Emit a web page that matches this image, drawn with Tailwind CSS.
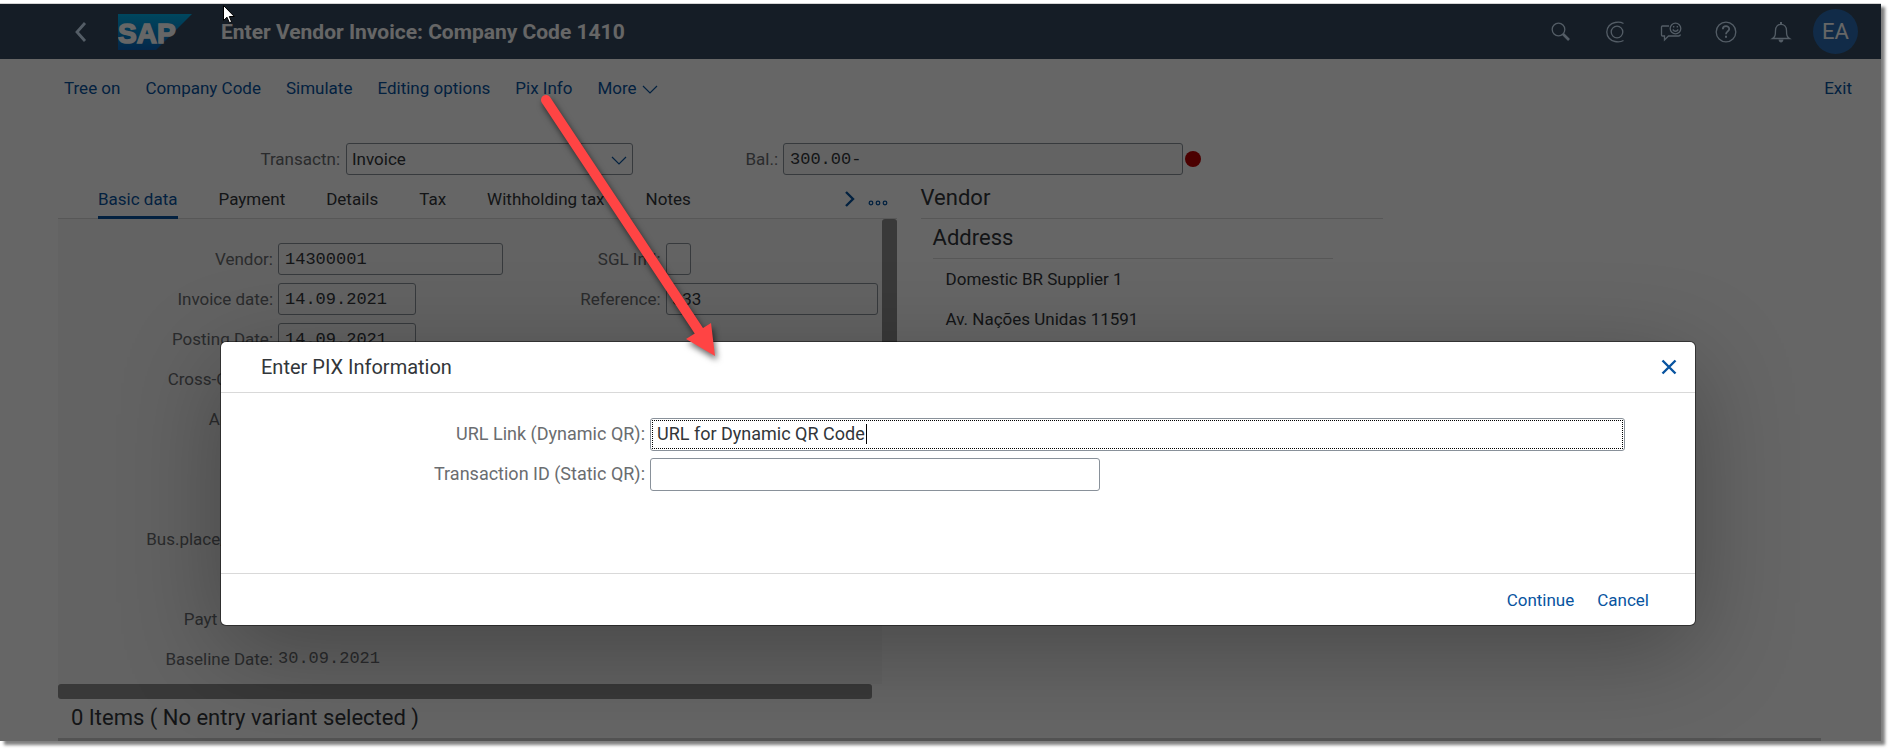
<!DOCTYPE html>
<html lang="en">
<head>
  <meta charset="UTF-8" />
  <meta name="viewport" content="width=device-width, initial-scale=1" />
  <title>Enter Vendor Invoice: Company Code 1410</title>
  <script src="https://cdn.jsdelivr.net/npm/@tailwindcss/browser@4"></script>
</head>
<body class="bg-white min-h-screen flex flex-col pt-[3px] pr-[9px] pb-[9px] text-[17px] leading-6 text-[#32363a] font-['Roboto','Liberation_Sans',sans-serif]">

  <div class="relative flex-1 flex flex-col bg-white border-t border-[#d4d4d4] shadow-[4px_4px_3px_rgba(0,0,0,0.5)]">

    <!-- Shell bar -->
    <header class="h-[55px] bg-[#354a5f] flex items-center pl-[73px] pr-[23px] text-white">
      <button aria-label="Back" class="w-4 mr-[29px]">
        <svg class="w-4 h-5" viewBox="0 0 16 20" fill="none" stroke="#d1e8ff" stroke-width="2.8"><path d="M12 1 4 10l8 9" /></svg>
      </button>
      <svg class="w-[74px] h-9 mr-[29px]" viewBox="0 0 74 36" role="img" aria-label="SAP">
        <defs>
          <linearGradient id="sap" x1="0" y1="0" x2="0" y2="1">
            <stop offset="0" stop-color="#00b1eb" />
            <stop offset="1" stop-color="#0a62b9" />
          </linearGradient>
        </defs>
        <path d="M0 0h74L38 36H0z" fill="url(#sap)" />
        <text x="0" y="29" font-family="Liberation Sans, sans-serif" font-weight="700" font-size="28" stroke="#fff" stroke-width="1.5" fill="#fff">SAP</text>
      </svg>
      <h1 class="flex-1 text-[21px] font-bold">Enter Vendor Invoice: Company Code 1410</h1>
      <div class="flex items-center gap-[33px] mr-[21px]">
        <button aria-label="Search">
          <svg class="w-[22px] h-[22px]" viewBox="0 0 22 22" fill="none" stroke="#d1e8ff" stroke-width="1.3"><circle cx="8.500" cy="8.500" r="6.300" /><path d="m13 13 6 6" stroke-width="2.600" /></svg>
        </button>
        <button aria-label="CoPilot">
          <svg class="w-[22px] h-[22px]" viewBox="0 0 22 22" fill="none" stroke="#d1e8ff" stroke-width="1.300"><path d="M18.500 2.500C16 1 13 .8 10 1.500A9.600 9.600 0 0 0 10 20.500C13 21.200 16 21 18.500 19.500" /><circle cx="12" cy="11" r="5.800" /></svg>
        </button>
        <button aria-label="Feedback">
          <svg class="w-[22px] h-[22px]" viewBox="0 0 22 22" fill="none" stroke="#d1e8ff" stroke-width="1.300"><path d="M9 5H2.500Q1.500 5 1.500 6v8q0 1 1 1h2v4l4-4h10q1.500 0 2-1.500" /><circle cx="15.500" cy="7.500" r="5.300" /><path d="M12.700 8.500q2.800 3.500 5.600 0" /><path d="M13.700 5v1.500m3.600-1.500v1.500" /></svg>
        </button>
        <button aria-label="Help">
          <svg class="w-[22px] h-[22px]" viewBox="0 0 22 22" fill="none" stroke="#d1e8ff" stroke-width="1.300"><circle cx="11" cy="11" r="9.800" /><path d="M7.800 8.300c0-4.100 6.400-4 6.400-.4 0 2.500-3.200 2.400-3.200 5.300" stroke-width="1.800" /><path d="M11 14.800v2" stroke-width="2" /></svg>
        </button>
        <button aria-label="Notifications">
          <svg class="w-[22px] h-[22px]" viewBox="0 0 22 22" fill="none" stroke="#d1e8ff" stroke-width="1.300"><path d="M2.500 17.500c2.500-1.500 3-3 3-8C5.500 5.500 8 3.300 11 3.300s5.500 2.200 5.500 6.200c0 5 .5 6.500 3 8z" /><path d="M11 1v2.300" stroke-width="2" /><path d="M8.500 18.500h5q-.5 3-2.500 3t-2.500-3z" fill="#d1e8ff" stroke="none" /></svg>
        </button>
      </div>
      <button class="size-[45px] rounded-full bg-[#2b6cb3] text-[22px] text-white">EA</button>
    </header>

    <!-- Toolbar -->
    <nav class="h-15 flex items-center gap-[25px] pl-16 pr-[29px] pb-0.5 text-[#0854a0]">
      <button>Tree on</button>
      <button>Company Code</button>
      <button>Simulate</button>
      <button>Editing options</button>
      <button>Pix Info</button>
      <button class="flex items-center gap-[5px]">More
        <svg class="w-4 h-4" viewBox="0 0 16 16" fill="none" stroke="currentColor" stroke-width="1.200"><path d="m1 6 7 7 7-7" /></svg>
      </button>
      <button class="ml-auto">Exit</button>
    </nav>

    <main class="flex-1 flex flex-col pl-[58px] pt-5">
      <div class="h-10 flex items-center text-[#6a6d70]">
        <label for="transactn" class="w-[282px] mr-[6px] text-right">Transactn:</label>
        <div class="relative w-[287px]">
          <select id="transactn" class="appearance-none w-full h-8 border border-[#89919a] rounded-[3px] pl-[5px] text-[#32363a]">
            <option>Invoice</option>
          </select>
          <svg class="absolute right-1.5 top-2 w-4 h-4 pointer-events-none" viewBox="0 0 16 16" fill="none" stroke="#0854a0" stroke-width="1.200"><path d="m1 6 7 7 7-7" /></svg>
        </div>
        <label for="bal" class="w-[145px] mr-[5px] text-right">Bal.:</label>
        <input id="bal" value="300.00-" readonly class="w-[400px] h-8 border border-[#89919a] rounded-[3px] bg-[#f7f7f7] px-[6px] text-[#32363a] font-['Liberation_Mono',monospace]" />
        <span class="ml-[2px] size-4 rounded-full bg-[#bb0000]"></span>
      </div>

      <div class="flex gap-6">
        <section class="w-[46%]">
          <div class="h-10 flex items-stretch gap-[41px] pl-10 pr-[9px] border-b border-[#d9d9d9] text-[#32363a]">
            <button class="-mb-px border-b-3 border-[#0854a0] pt-[3px] text-[#0854a0]">Basic data</button>
            <button>Payment</button>
            <button>Details</button>
            <button>Tax</button>
            <button>Withholding tax</button>
            <button>Notes</button>
            <div class="ml-auto flex items-center gap-3">
              <button aria-label="Next tabs"><svg class="w-3 h-4" viewBox="0 0 12 16" fill="none" stroke="#0854a0" stroke-width="2.400"><path d="m2 1 7 7-7 7" /></svg></button>
              <button aria-label="All tabs"><svg class="w-5 h-4" viewBox="0 0 20 16" fill="none" stroke="#0854a0" stroke-width="1.300"><circle cx="3" cy="12" r="1.800" /><circle cx="10" cy="12" r="1.800" /><circle cx="17" cy="12" r="1.800" /></svg></button>
            </div>
          </div>

          <div class="flex">
            <div class="flex-1 bg-[#f7f7f7] pt-5 pb-[5px] pr-1 grid grid-cols-[215px_1fr_100px_212px] auto-rows-[40px] items-center gap-x-[5px] text-[#6a6d70]">
              <label for="vendor" class="text-right">Vendor:</label>
              <input id="vendor" value="14300001" class="w-[225px] h-8 border border-[#89919a] rounded-[3px] px-[6px] text-[#32363a] font-['Liberation_Mono',monospace]" />
              <label for="sgl" class="text-right whitespace-nowrap">SGL Ind:</label>
              <input id="sgl" class="w-[25px] h-8 border border-[#89919a] rounded-[3px]" />

              <label for="invoice-date" class="text-right">Invoice date:</label>
              <input id="invoice-date" value="14.09.2021" class="w-[138px] h-8 border border-[#89919a] rounded-[3px] px-[6px] text-[#32363a] font-['Liberation_Mono',monospace]" />
              <label for="reference" class="text-right">Reference:</label>
              <input id="reference" value="333" class="w-full h-8 border border-[#89919a] rounded-[3px] px-[6px] text-[#32363a]" />

              <label for="posting-date" class="text-right">Posting Date:</label>
              <input id="posting-date" value="14.09.2021" class="w-[138px] h-8 border border-[#89919a] rounded-[3px] px-[6px] text-[#32363a] font-['Liberation_Mono',monospace]" />

              <span class="col-start-1 text-right">Cross-CC No.:</span>
              <span class="col-start-1 text-right">Amount:</span>
              <span class="col-start-1 row-start-8 text-right">Bus.place/sectn:</span>
              <span class="col-start-1 row-start-10 text-right">Payt Terms:</span>
              <span class="col-start-1 row-start-11 text-right">Baseline Date:</span>
              <span class="row-start-11 font-['Liberation_Mono',monospace]">30.09.2021</span>
            </div>
            <div class="w-[15px] h-60 rounded-[3px] bg-[#8f8f8f]"></div>
          </div>
          <div class="mr-[25px] h-[15px] rounded-[3px] bg-[#8f8f8f]"></div>
        </section>

        <section class="w-[462px]">
          <h2 class="h-10 border-b border-[#d9d9d9] text-[22px] leading-[38px]">Vendor</h2>
          <div class="pl-3">
            <h3 class="w-[400px] h-10 border-b border-[#d9d9d9] text-[22px] leading-[38px]">Address</h3>
            <p class="pl-[13px] leading-10">Domestic BR Supplier 1</p>
            <p class="pl-[13px] leading-10">Av. Nações Unidas 11591</p>
          </div>
        </section>
      </div>

      <h2 class="h-[39px] pl-[13px] text-[22px] leading-[38px]">0 Items ( No entry variant selected )</h2>
      <div class="flex-1 mr-15 bg-[#d0d0d0]"></div>
    </main>

    <!-- Dialog -->
    <div class="absolute inset-0 overflow-hidden bg-black/60 pt-[338px] pl-[221px] pr-[186px]">
      <div role="dialog" aria-labelledby="dialog-title" class="bg-white rounded-[5px] shadow-[0_0_0_1px_rgba(0,0,0,0.45),0_25px_100px_rgba(0,0,0,0.3)]">
        <div class="h-[51px] flex items-center justify-between pl-10 pr-[18px] border-b border-[#d9d9d9]">
          <h2 id="dialog-title" class="text-xl">Enter PIX Information</h2>
          <button aria-label="Close"><svg class="w-4 h-4" viewBox="0 0 16 16" fill="none" stroke="#0854a0" stroke-width="2.400"><path d="m1.500 1.500 13 13m0-13-13 13" /></svg></button>
        </div>
        <div class="h-[181px] pt-[21px] pr-[70px] border-b border-[#d9d9d9] grid grid-cols-[424px_1fr] auto-rows-[40px] items-center content-start gap-x-[5px] text-lg text-[#6a6d70]">
          <label for="url-link" class="text-right">URL Link (Dynamic QR):</label>
          <div class="relative h-[33px] border border-[#89919a] rounded-[3px] p-px">
            <input id="url-link" value="URL for Dynamic QR Code" class="block w-full h-[29px] border border-dotted border-black outline-none px-1 pb-0.5 text-[#32363a]" />
            <span class="absolute left-[215px] top-[5px] w-px h-5 bg-black"></span>
          </div>
          <label for="transaction-id" class="text-right">Transaction ID (Static QR):</label>
          <input id="transaction-id" class="w-[450px] h-[33px] border border-[#89919a] rounded-[3px] px-[6px] text-[#32363a]" />
        </div>
        <div class="h-[51px] flex items-center justify-end gap-[23px] pr-[46px] text-[#0854a0]">
          <button>Continue</button>
          <button>Cancel</button>
        </div>
      </div>
    </div>
  </div>

  <!-- Arrow from Pix Info to the dialog -->
  <svg class="absolute left-[530px] top-[85px] w-[200px] h-[290px] pointer-events-none drop-shadow-[2px_4px_3px_rgba(0,0,0,0.6)]" viewBox="0 0 200 290" fill="#ff4444">
    <path d="M16 15 169 246" stroke="#ff4444" stroke-width="10" stroke-linecap="round" />
    <path d="m185 271-29-17 8-5 9-6 8-5z" />
  </svg>
  <!-- Mouse pointer -->
  <svg class="absolute left-[223px] top-[5px] w-3 h-[19px] pointer-events-none" viewBox="0 0 12 19" fill="#fff" stroke="#000" stroke-width="1"><path d="M.5.500v15l3.500-3.300 2.400 5.600 2.200-1L6.300 11.500h5z" /></svg>

</body>
</html>
